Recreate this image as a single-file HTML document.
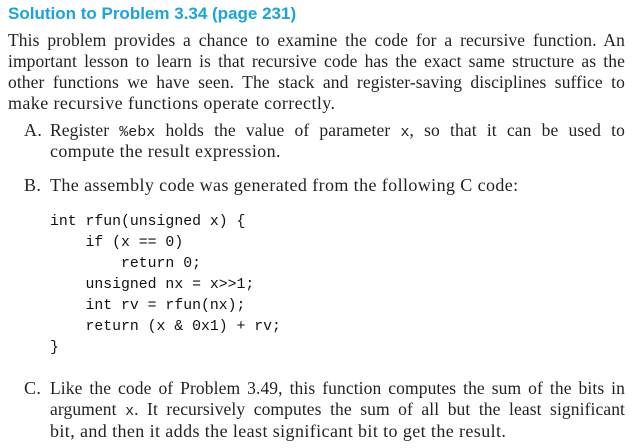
<!DOCTYPE html>
<html><head><style>
body{margin:0;width:634px;height:448px;background:#fff;position:relative;overflow:hidden;color:#231f20}
.l{position:absolute;font-family:"Liberation Serif",serif;font-size:18px;letter-spacing:0.4px;line-height:21px;white-space:nowrap}
.j{text-align:justify;text-align-last:justify;white-space:normal;font-size:17.5px;letter-spacing:0.1px;height:21px}
.t{position:absolute;left:8px;top:3px;font-family:"Liberation Sans",sans-serif;font-weight:bold;font-size:17px;color:#1aa3dc;line-height:21px}
.c{position:absolute;left:50px;font-family:"Liberation Mono",monospace;font-size:14.8px;line-height:21px;white-space:pre;color:#111}
.m{font-family:"Liberation Mono",monospace;font-size:15px;letter-spacing:0}
</style></head><body>
<div class="t">Solution to Problem 3.34 (page 231)</div>
<div class="l j" style="left:8px;width:617px;top:30px">This problem provides a chance to examine the code for a recursive function. An</div>
<div class="l j" style="left:8px;width:617px;top:51px">important lesson to learn is that recursive code has the exact same structure as the</div>
<div class="l j" style="left:8px;width:617px;top:72px">other functions we have seen. The stack and register-saving disciplines suffice to</div>
<div class="l" style="left:8px;top:93px">make recursive functions operate correctly.</div>
<div class="l" style="left:24px;top:120px">A.</div>
<div class="l j" style="left:50px;width:575px;top:120px">Register <span class="m">%ebx</span> holds the value of parameter <span class="m">x</span>, so that it can be used to</div>
<div class="l" style="left:50px;top:141px">compute the result expression.</div>
<div class="l" style="left:24px;top:175px">B.</div>
<div class="l" style="left:50px;top:175px">The assembly code was generated from the following C code:</div>
<div class="c" style="top:212px">int rfun(unsigned x) {
    if (x == 0)
        return 0;
    unsigned nx = x&gt;&gt;1;
    int rv = rfun(nx);
    return (x &amp; 0x1) + rv;
}</div>
<div class="l" style="left:24px;top:378px">C.</div>
<div class="l j" style="left:50px;width:575px;top:378px">Like the code of Problem 3.49, this function computes the sum of the bits in</div>
<div class="l j" style="left:50px;width:575px;top:399px">argument <span class="m">x</span>. It recursively computes the sum of all but the least significant</div>
<div class="l" style="left:50px;top:421px">bit, and then it adds the least significant bit to get the result.</div>
</body></html>
